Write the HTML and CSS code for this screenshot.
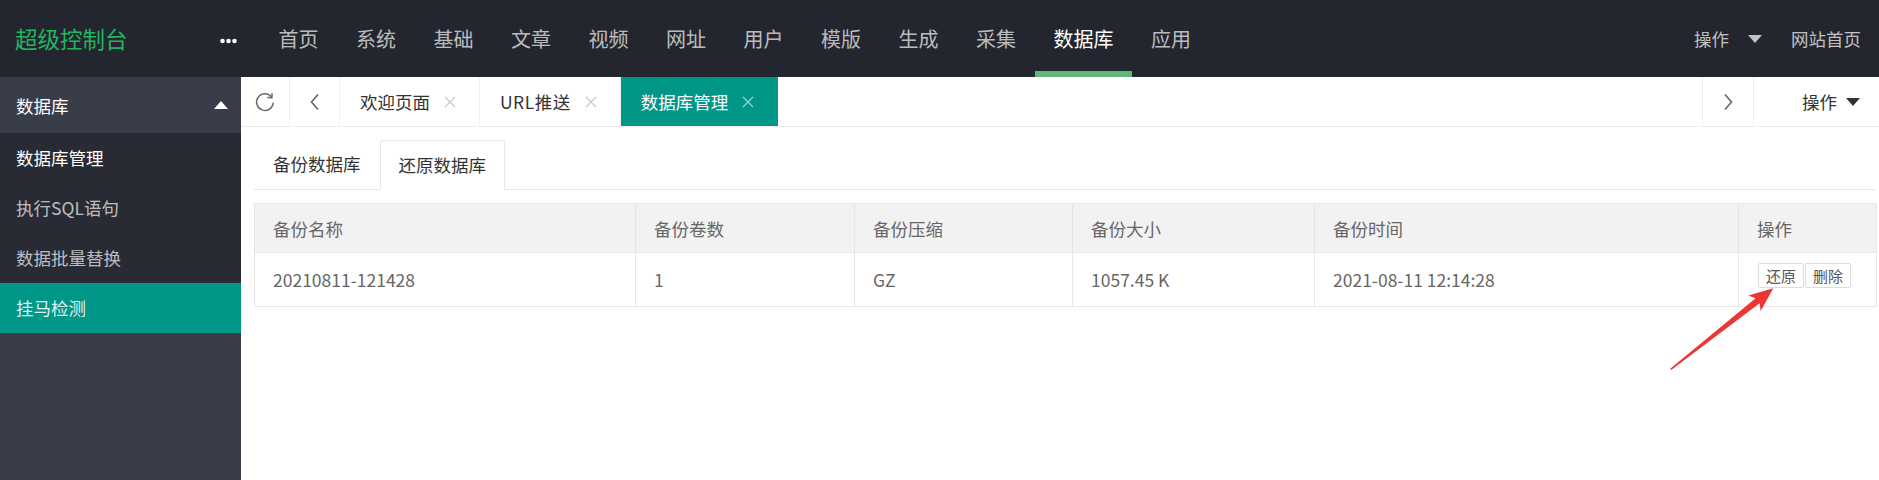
FILE: index.html
```html
<!DOCTYPE html>
<html lang="zh-CN">
<head>
<meta charset="utf-8">
<title>超级控制台</title>
<link rel="stylesheet" href="styles.css">
</head>
<body>
<div class="app">
  <header class="topbar">
    <div class="logo">超级控制台</div>
    <div class="more">
      <svg width="17" height="6" viewBox="0 0 17 6"><circle cx="2.5" cy="3" r="2.3"/><circle cx="8.5" cy="3" r="2.3"/><circle cx="14.5" cy="3" r="2.3"/></svg>
    </div>
    <nav class="mainnav">
      <a class="nav-item">首页</a>
      <a class="nav-item">系统</a>
      <a class="nav-item">基础</a>
      <a class="nav-item">文章</a>
      <a class="nav-item">视频</a>
      <a class="nav-item">网址</a>
      <a class="nav-item">用户</a>
      <a class="nav-item">模版</a>
      <a class="nav-item">生成</a>
      <a class="nav-item">采集</a>
      <a class="nav-item active">数据库</a>
      <a class="nav-item">应用</a>
    </nav>
    <nav class="rightnav">
      <a class="rnav-item op">操作<span class="caret-down"></span></a>
      <a class="rnav-item home">网站首页</a>
    </nav>
  </header>
  <div class="layout">
    <aside class="side">
      <div class="side-head"><span>数据库</span><span class="caret-up"></span></div>
      <ul class="side-list">
        <li class="side-item current">数据库管理</li>
        <li class="side-item">执行SQL语句</li>
        <li class="side-item">数据批量替换</li>
        <li class="side-item on">挂马检测</li>
      </ul>
    </aside>
    <main class="main">
      <div class="tabbar">
        <div class="tb-btn refresh">
          <svg width="22" height="22" viewBox="0 0 22 22"><path d="M17.6 6.2 A8.3 8.3 0 1 0 19.2 11.6" fill="none" stroke="#6b6b6b" stroke-width="1.5"/><path d="M18.1 2.1 L17.9 6.8 L13.3 6.5" fill="none" stroke="#6b6b6b" stroke-width="1.5"/></svg>
        </div>
        <div class="tb-btn prev">
          <svg width="12" height="18" viewBox="0 0 12 18"><path d="M9 1.5 L2.5 9 L9 16.5" fill="none" stroke="#666" stroke-width="1.6"/></svg>
        </div>
        <div class="ptab"><span>欢迎页面</span><span class="close"><svg width="12" height="12" viewBox="0 0 12 12"><path d="M1 1 L11 11 M11 1 L1 11" stroke="currentColor" stroke-width="1.2"/></svg></span></div>
        <div class="ptab"><span class="latin">URL推送</span><span class="close"><svg width="12" height="12" viewBox="0 0 12 12"><path d="M1 1 L11 11 M11 1 L1 11" stroke="currentColor" stroke-width="1.2"/></svg></span></div>
        <div class="ptab active"><span>数据库管理</span><span class="close"><svg width="12" height="12" viewBox="0 0 12 12"><path d="M1 1 L11 11 M11 1 L1 11" stroke="currentColor" stroke-width="1.2"/></svg></span></div>
        <div class="tb-fill"></div>
        <div class="tb-btn next">
          <svg width="12" height="18" viewBox="0 0 12 18"><path d="M3 1.5 L9.5 9 L3 16.5" fill="none" stroke="#666" stroke-width="1.6"/></svg>
        </div>
        <div class="tb-op">操作<span class="caret-dark"></span></div>
      </div>
      <div class="content">
        <ul class="ctabs">
          <li class="ctab">备份数据库</li>
          <li class="ctab active">还原数据库</li>
        </ul>
        <table class="grid">
          <colgroup>
            <col class="c1"><col class="c2"><col class="c3"><col class="c4"><col class="c5"><col class="c6">
          </colgroup>
          <thead>
            <tr><th>备份名称</th><th>备份卷数</th><th>备份压缩</th><th>备份大小</th><th>备份时间</th><th>操作</th></tr>
          </thead>
          <tbody>
            <tr>
              <td>20210811-121428</td>
              <td>1</td>
              <td>GZ</td>
              <td>1057.45 K</td>
              <td>2021-08-11 12:14:28</td>
              <td class="ops"><div class="btns"><span class="btn">还原</span><span class="btn">删除</span></div></td>
            </tr>
          </tbody>
        </table>
      </div>
    </main>
  </div>
  <svg class="arrow" width="1879" height="480" viewBox="0 0 1879 480">
    <polygon points="1670.2,368.7 1755.6,298.2 1748.3,295.4 1773.3,288.3 1760.7,311.0 1759.6,303.2 1671.2,369.9" fill="#ef3434"/>
  </svg>
</div>
</body>
</html>
```

FILE: styles.css
```css
* { box-sizing: border-box; margin: 0; padding: 0; }
ul { list-style: none; }
body {
  width: 1879px;
  height: 480px;
  overflow: hidden;
  background: #fff;
  font-family: "Noto Sans CJK SC", "Noto Sans", sans-serif;
}
.app { position: relative; width: 1879px; height: 480px; display: flex; flex-direction: column; }

/* top bar */
.topbar { height: 77px; background: #23262e; display: flex; align-items: stretch; flex: none; }
.logo { width: 220px; padding-left: 15px; color: #22b55f; font-size: 22.5px; line-height: 77px; }
.more { width: 40px; display: flex; align-items: center; padding-top: 4px; }
.more svg { fill: #fff; }
.mainnav { display: flex; }
.nav-item {
  position: relative;
  padding: 0 18.75px;
  font-size: 20px;
  line-height: 77px;
  color: rgba(255,255,255,.7);
}
.nav-item:first-child { padding-left: 18.5px; }
.nav-item.active { color: #fff; }
.nav-item.active::after {
  content: "";
  position: absolute;
  left: 0; right: 0; bottom: 0;
  height: 6px;
  background: #5fb878;
}
.rightnav { margin-left: auto; display: flex; }
.rnav-item { font-size: 17.5px; line-height: 77px; color: rgba(255,255,255,.72); display: flex; align-items: center; }
.rnav-item.op { padding: 0 11px 0 18px; }
.rnav-item.home { padding: 0 18px; }
.caret-down {
  margin-left: 19px;
  width: 0; height: 0;
  border-left: 7px solid transparent;
  border-right: 7px solid transparent;
  border-top: 8px solid rgba(255,255,255,.72);
}

/* layout */
.layout { flex: 1; display: flex; min-height: 0; }
.side { width: 241px; flex: none; background: #393d49; }
.side-head {
  height: 56px;
  padding: 0 13px 0 16px;
  display: flex; align-items: center; justify-content: space-between;
  color: #fff; font-size: 17.5px;
}
.caret-up {
  width: 0; height: 0;
  border-left: 7.5px solid transparent;
  border-right: 7.5px solid transparent;
  border-bottom: 8px solid #fff;
}
.side-list { background: #282b33; }
.side-item { height: 50px; line-height: 50px; padding-left: 16px; font-size: 17.5px; color: rgba(255,255,255,.7); }
.side-item.current { color: #fff; }
.side-item.on { background: #009688; color: rgba(255,255,255,.88); }

/* main */
.main { flex: 1; display: flex; flex-direction: column; min-width: 0; }
.tabbar { height: 50px; flex: none; display: flex; border-bottom: 1px solid #ececec; background: #fff; }
.tb-btn { display: flex; align-items: center; justify-content: center; border-right: 1px solid #f0f0f0; }
.tb-btn.refresh { width: 49px; }
.tb-btn.prev { width: 50px; }
.tb-btn.next { width: 51px; border-right: none; border-left: 1px solid #f0f0f0; }
.ptab {
  display: flex; align-items: center;
  padding: 0 20px;
  border-right: 1px solid #f0f0f0;
  font-size: 17.5px; color: #333;
}
.ptab .latin { letter-spacing: 0.5px; }
.ptab .close { margin-left: 11px; width: 18px; height: 18px; display: flex; align-items: center; justify-content: center; color: #c8c8c8; }
.ptab.active { background: #009688; color: #fff; border-right-color: #009688; }
.ptab.active .close { color: rgba(255,255,255,.6); }
.tb-fill { flex: 1; }
.tb-op {
  width: 126px;
  border-left: 1px solid #f0f0f0;
  display: flex; align-items: center; justify-content: flex-end;
  padding-right: 19px;
  font-size: 17.5px; color: #333;
}
.caret-dark {
  margin-left: 9px;
  width: 0; height: 0;
  border-left: 7px solid transparent;
  border-right: 7px solid transparent;
  border-top: 8px solid #333;
}

.content { padding: 13px 3px 0 13px; }
.ctabs { display: flex; align-items: flex-start; height: 50px; border-bottom: 1px solid #e6e6e6; }
.ctab { height: 49px; line-height: 47px; padding: 0 19px; font-size: 17.5px; color: #333; }
.ctab.active {
  position: relative;
  height: 50px;
  border: 1px solid #e6e6e6;
  border-bottom-color: #fff;
  background: #fff;
  border-radius: 2px 2px 0 0;
  padding: 0 18px;
}

.grid {
  margin-top: 13px;
  width: 100%;
  table-layout: fixed;
  border-collapse: collapse;
  border: 1px solid #e6e6e6;
  font-size: 17.5px;
  color: #666;
}
.c1 { width: 381px; }
.c2 { width: 219px; }
.c3 { width: 218px; }
.c4 { width: 242px; }
.c5 { width: 424px; }
.c6 { width: 138px; }
.grid th, .grid td {
  border: 1px solid #e6e6e6;
  padding: 0 18px;
  text-align: left;
  font-weight: normal;
  white-space: nowrap;
}
.grid th { height: 49px; background: #f2f2f2; }
.grid td { height: 54px; }
.grid td.ops { vertical-align: top; padding: 10px 0 0 19px; }
.btns { display: flex; }
.btn {
  height: 25px; line-height: 23px;
  padding: 0 7px;
  border: 1px solid #dcdcdc;
  background: #fff;
  color: #555;
  font-size: 15px;
  border-radius: 2px;
}
.btn + .btn { margin-left: 1px; }

.arrow { position: absolute; left: 0; top: 0; pointer-events: none; }
```
